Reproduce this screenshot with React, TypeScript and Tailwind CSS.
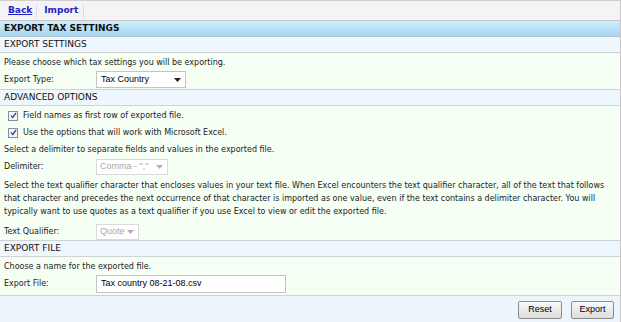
import React from 'react';

const Caret = ({ color }: { color: string }) => (
  <svg width="7" height="4" viewBox="0 0 7 4" className="shrink-0">
    <path d="M0 0 L7 0 L3.5 4 Z" fill={color} />
  </svg>
);

const SectionHeader = ({ title }: { title: string }) => (
  <div className="h-[16px] flex items-center px-[4px] bg-[#eef6fe] border-b border-[#cfd3d6] text-[#111] text-[9px]">
    {title}
  </div>
);

const Row = ({ label, children }: { label: string; children: React.ReactNode }) => (
  <div className="flex items-center h-[17px]">
    <div className="w-[92px] shrink-0">{label}</div>
    {children}
  </div>
);

const Check = ({ label }: { label: string }) => (
  <div className="flex items-center h-[17px] gap-[5px] pl-[4px]">
    <div className="w-[10px] h-[10px] border border-[#8a8f96] bg-[#f4f6f8] flex items-center justify-center">
      <svg width="7" height="7" viewBox="0 0 7 7">
        <path d="M1 3.5 L2.8 5.5 L6 1" stroke="#3b4aa8" strokeWidth="1.4" fill="none" />
      </svg>
    </div>
    <span>{label}</span>
  </div>
);

const App: React.FC = () => {
  return (
    <div
      className="w-[621px] h-[322px] bg-white border-r border-[#c8c8c8] text-[8px] text-[#222] overflow-hidden flex flex-col"
      style={{ fontFamily: '"DejaVu Sans", Verdana, sans-serif' }}
    >
      {/* nav */}
      <div className="h-[21px] bg-[#f4f4f4] border-t border-[#d0d0d0] border-b border-b-[#c4c4c4] flex items-center text-[9px] font-bold">
        <a href="#" className="text-[#2323c8] underline pl-[8px] pr-[4px]">Back</a>
        <div className="w-px h-[14px] bg-[#dcdcdc]" />
        <a href="#" className="text-[#2323c8] pl-[7px] pr-[5px]">Import</a>
        <div className="w-px h-[14px] bg-[#dcdcdc]" />
      </div>

      {/* title */}
      <div className="h-[16px] flex items-center px-[4px] bg-gradient-to-b from-[#cdeefd] to-[#a4d6f4] border-b border-[#b8c4cc] font-bold text-[9px] text-[#111]">
        EXPORT TAX SETTINGS
      </div>

      <SectionHeader title="EXPORT SETTINGS" />
      <div className="bg-[#f5fff4] px-[4px] pt-[1px] pb-[1px] border-b border-[#cfd3d6]">
        <div className="h-[17px] flex items-center">Please choose which tax settings you will be exporting.</div>
        <Row label="Export Type:">
          <div
            className="w-[90px] h-[17px] bg-white border border-[#c4c4c4] flex items-center justify-between pl-[4px] pr-[4px] text-[9px] text-black"
            style={{ fontFamily: '"Liberation Sans", Arial, sans-serif' }}
          >
            <span>Tax Country</span>
            <Caret color="#222" />
          </div>
        </Row>
      </div>

      <SectionHeader title="ADVANCED OPTIONS" />
      <div className="bg-[#f5fff4] px-[4px] pt-[1px] pb-0 border-b border-[#cfd3d6]">
        <Check label="Field names as first row of exported file." />
        <Check label="Use the options that will work with Microsoft Excel." />
        <div className="h-[17px] flex items-center">Select a delimiter to separate fields and values in the exported file.</div>
        <Row label="Delimiter:">
          <div
            className="w-[72px] h-[16px] bg-white border border-[#dadada] flex items-center justify-between pl-[3px] pr-[4px] text-[9px] text-[#a8a8a8]"
            style={{ fontFamily: '"Liberation Sans", Arial, sans-serif' }}
          >
            <span>Comma - ","</span>
            <Caret color="#b0b0b0" />
          </div>
        </Row>
        <p className="leading-[13px] pt-[4px] pb-[5px]">
          Select the text qualifier character that encloses values in your text file. When Excel encounters the text qualifier character, all of the text that follows that character and precedes the next occurrence of that character is imported as one value, even if the text contains a delimiter character. You will typically want to use quotes as a text qualifier if you use Excel to view or edit the exported file.
        </p>
        <Row label="Text Qualifier:">
          <div
            className="w-[43px] h-[16px] bg-white border border-[#dadada] flex items-center justify-between pl-[3px] pr-[4px] text-[9px] text-[#a8a8a8]"
            style={{ fontFamily: '"Liberation Sans", Arial, sans-serif' }}
          >
            <span>Quote</span>
            <Caret color="#b0b0b0" />
          </div>
        </Row>
      </div>

      <SectionHeader title="EXPORT FILE" />
      <div className="bg-[#f5fff4] px-[4px] pt-[1px] pb-[3px] border-b border-[#cfd3d6]">
        <div className="h-[17px] flex items-center">Choose a name for the exported file.</div>
        <Row label="Export File:">
          <div
            className="w-[190px] h-[18px] bg-white border border-[#c4c4c4] flex items-center pl-[4px] text-[9px] text-black"
            style={{ fontFamily: '"Liberation Sans", Arial, sans-serif' }}
          >
            Tax country 08-21-08.csv
          </div>
        </Row>
      </div>

      {/* footer */}
      <div
        className="flex-1 bg-[#eef4fc] flex items-start justify-end gap-[9px] pt-[5px] pr-[6px] text-[9px] text-black"
        style={{ fontFamily: '"Liberation Sans", Arial, sans-serif' }}
      >
        <button className="w-[44px] h-[18px] border border-[#8c8c8c] rounded-[2px] bg-gradient-to-b from-[#fafafa] to-[#dcdcdc]">Reset</button>
        <button className="w-[43px] h-[18px] border border-[#8c8c8c] rounded-[2px] bg-gradient-to-b from-[#fafafa] to-[#dcdcdc]">Export</button>
      </div>
    </div>
  );
};

export default App;
